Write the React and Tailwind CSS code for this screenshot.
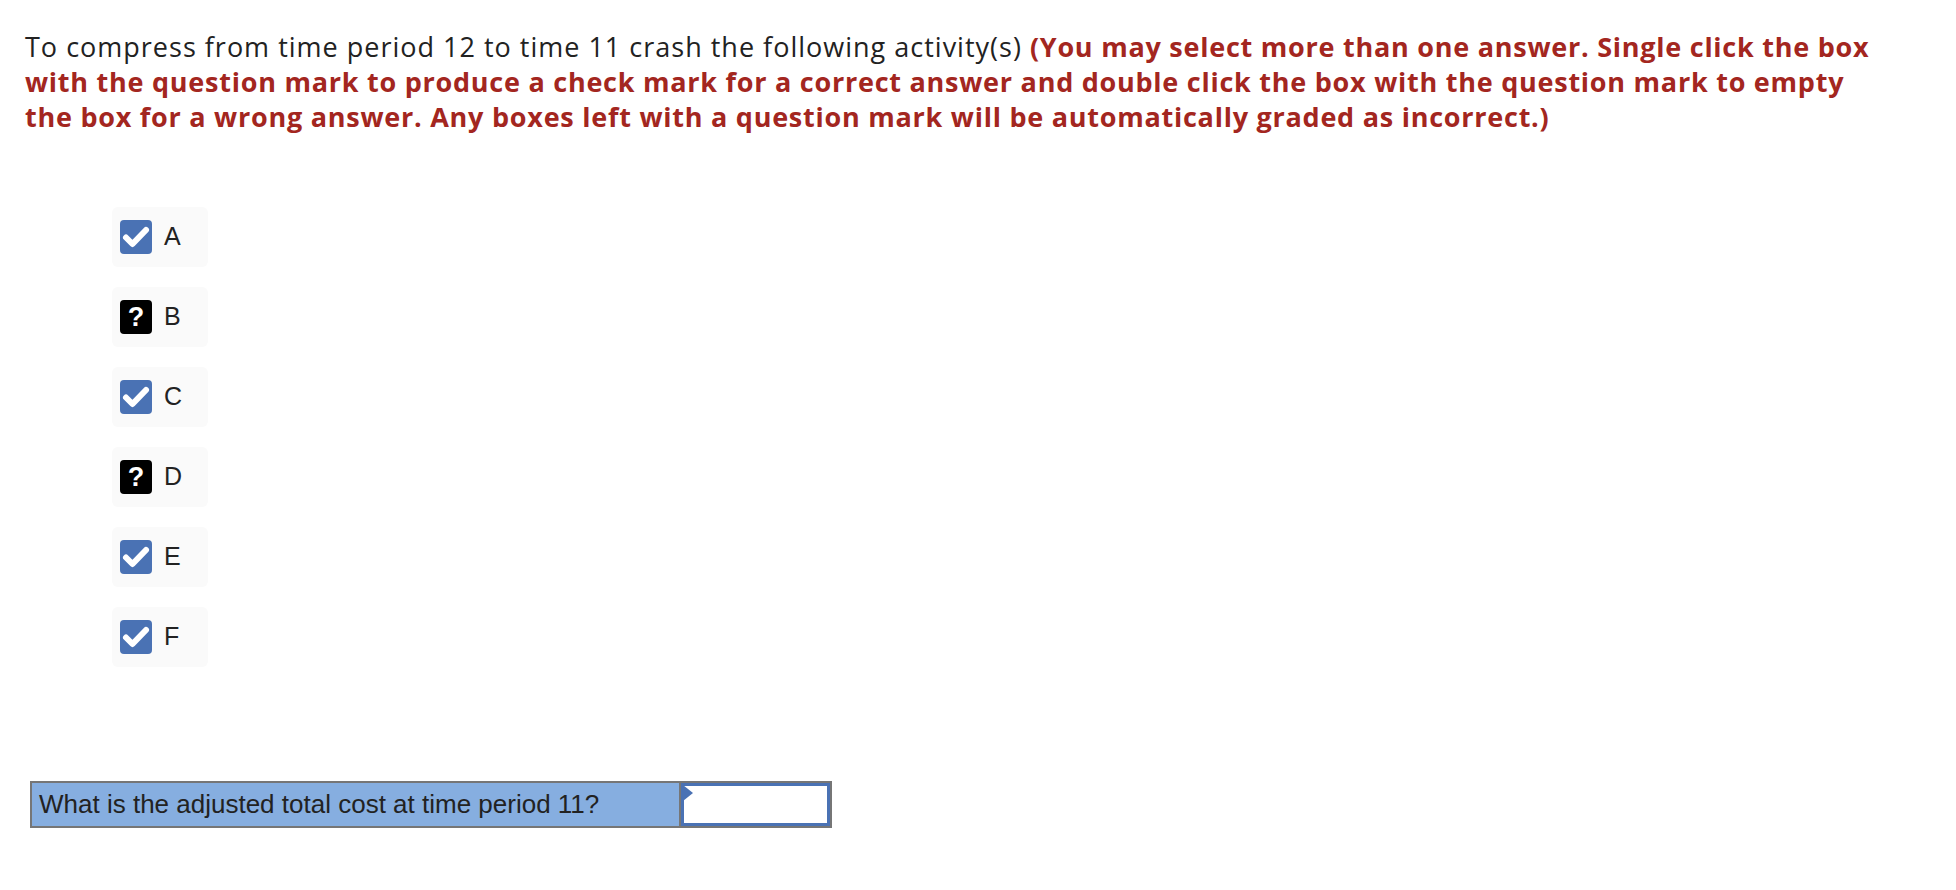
const options = [
  { label: 'A', state: 'checked' },
  { label: 'B', state: 'unknown' },
  { label: 'C', state: 'checked' },
  { label: 'D', state: 'unknown' },
  { label: 'E', state: 'checked' },
  { label: 'F', state: 'checked' },
];

const CheckBox = () => (
  <svg width="32" height="34" viewBox="0 0 32 34">
    <rect x="0" y="0" width="32" height="34" rx="4" fill="#4a72b4" />
    <path
      d="M6 17.5 L12.5 24 L26 10"
      fill="none"
      stroke="#ffffff"
      strokeWidth="6"
      strokeLinecap="round"
      strokeLinejoin="round"
    />
  </svg>
);

const QuestionBox = () => (
  <div className="w-[32px] h-[34px] rounded-[4px] bg-black flex items-center justify-center text-white text-[27px] font-black leading-none font-['Liberation_Sans',Arial,sans-serif]">
    ?
  </div>
);

const App = () => {
  return (
    <div className="min-h-[890px] bg-white pl-[25px] pt-[29px] font-['Open_Sans','Lato',sans-serif]">
      <p className="w-[1868px] text-[27px] leading-[35px] text-[#222222] tracking-[1px]">
        To compress from time period 12 to time 11 crash the following activity(s){' '}
        <strong className="font-bold text-[#a32620] tracking-[0.75px]">
          (You may select more than one answer. Single click the box with the question mark to produce a check mark for a correct answer and double click the box with the question mark to empty the box for a wrong answer. Any boxes left with a question mark will be automatically graded as incorrect.)
        </strong>
      </p>

      {/* Answer choices */}
      <div className="mt-[73px] ml-[87px] flex flex-col gap-[20px]">
        {options.map((opt) => (
          <div
            key={opt.label}
            className="w-[96px] h-[60px] rounded-[6px] bg-[#fafafa] flex items-center pl-[8px] gap-[12px]"
          >
            {opt.state === 'checked' ? <CheckBox /> : <QuestionBox />}
            <span className="text-[25px] text-[#222222] font-['Liberation_Sans',Arial,sans-serif]">
              {opt.label}
            </span>
          </div>
        ))}
      </div>

      {/* Answer table */}
      <div className="mt-[114px] ml-[5px] w-[802px] h-[47px] border-2 border-[#767676] flex">
        <div className="w-[649px] bg-[#86aee0] border-r-2 border-[#767676] flex items-center pl-[7px]">
          <span className="text-[26px] text-[#222222] font-['Liberation_Sans',Arial,sans-serif]">
            What is the adjusted total cost at time period 11?
          </span>
        </div>
        <div className="relative flex-1 bg-white border-[3px] border-[#4a72b4]">
          <svg className="absolute left-[-1px] top-[-1px]" width="11" height="16" viewBox="0 0 11 16">
            <path d="M0 0 L10 8 L0 16 Z" fill="#4a72b4" />
          </svg>
        </div>
      </div>
    </div>
  );
};

export default App;
